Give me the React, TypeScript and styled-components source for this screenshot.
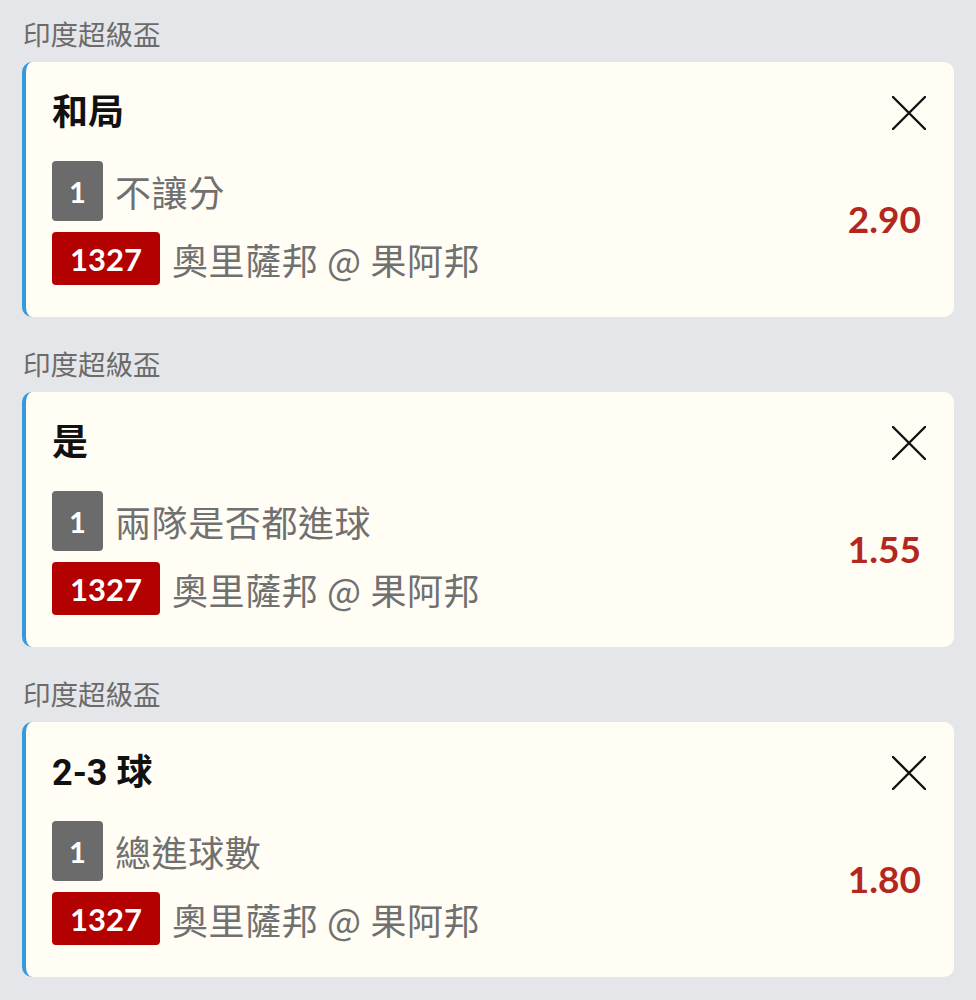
import React from "react";
import styled, { createGlobalStyle } from "styled-components";

const GlobalStyle = createGlobalStyle`
  html, body {
    margin: 0;
    padding: 0;
    background: #e5e6ea;
  }
  body {
    font-family: "Noto Sans CJK TC", "Noto Sans", sans-serif;
  }
`;

const Page = styled.div`
  padding: 16px 22px 0 22px;
  display: flex;
  flex-direction: column;
  gap: 29px;
`;

const Group = styled.section`
  display: flex;
  flex-direction: column;
  gap: 12px;
`;

const League = styled.div`
  font-size: 27.5px;
  line-height: 34px;
  color: #6b6b6b;
  padding-left: 1px;
`;

const Card = styled.div`
  background: #fffdf4;
  border-radius: 10px;
  border-left: 4px solid #3798da;
  padding: 29px 28px 32px 26px;
  display: grid;
  grid-template-columns: 1fr auto;
  grid-template-rows: auto auto;
  row-gap: 26px;
  height: 255px;
  box-sizing: border-box;
`;

const Title = styled.div`
  font-size: 36px;
  line-height: 44px;
  font-weight: 700;
  color: #111;
  font-family: "Roboto", "Noto Sans CJK TC", sans-serif;
`;

const Close = styled.button`
  justify-self: end;
  border: 0;
  background: transparent;
  padding: 0;
  width: 34px;
  height: 44px;
  display: flex;
  align-items: center;
  justify-content: center;
  cursor: pointer;
`;

const Lines = styled.div`
  display: flex;
  flex-direction: column;
  gap: 11px;
`;

const Line = styled.div`
  display: flex;
  align-items: center;
  gap: 12px;
`;

const Badge = styled.span<{ $tone: "gray" | "red" }>`
  display: inline-flex;
  align-items: center;
  justify-content: center;
  box-sizing: border-box;
  height: ${(p) => (p.$tone === "gray" ? "60px" : "53px")};
  min-width: ${(p) => (p.$tone === "gray" ? "51px" : "108px")};
  border-radius: 4px;
  background: ${(p) => (p.$tone === "gray" ? "#6b6b6b" : "#b30000")};
  color: #fff;
  font-family: "Lato", sans-serif;
  font-weight: 700;
  font-size: ${(p) => (p.$tone === "gray" ? "29px" : "31px")};
`;

const LineText = styled.span`
  font-size: 36px;
  line-height: 46px;
  color: #707070;
  white-space: nowrap;
  letter-spacing: 0.6px;
`;

const Odds = styled.div`
  align-self: center;
  justify-self: end;
  margin: 0 5px 10px 0;
  font-family: "Lato", sans-serif;
  font-weight: 700;
  font-size: 37px;
  color: #b3271f;
`;

type Bet = { title: string; market: string; odds: string };

const bets: Bet[] = [
  { title: "和局", market: "不讓分", odds: "2.90" },
  { title: "是", market: "兩隊是否都進球", odds: "1.55" },
  { title: "2-3 球", market: "總進球數", odds: "1.80" },
];

const XIcon = () => (
  <svg width="34" height="34" viewBox="0 0 34 34" fill="none">
    <path d="M1 1 L33 33 M33 1 L1 33" stroke="#111" strokeWidth="2.4" strokeLinecap="round" />
  </svg>
);

export default function App() {
  return (
    <>
      <GlobalStyle />
      <Page>
        {bets.map((b) => (
          <Group key={b.title}>
            <League>印度超級盃</League>
            <Card>
              <Title>{b.title}</Title>
              <Close aria-label="close">
                <XIcon />
              </Close>
              <Lines>
                <Line>
                  <Badge $tone="gray">1</Badge>
                  <LineText>{b.market}</LineText>
                </Line>
                <Line>
                  <Badge $tone="red">1327</Badge>
                  <LineText>奧里薩邦 @ 果阿邦</LineText>
                </Line>
              </Lines>
              <Odds>{b.odds}</Odds>
            </Card>
          </Group>
        ))}
      </Page>
    </>
  );
}
